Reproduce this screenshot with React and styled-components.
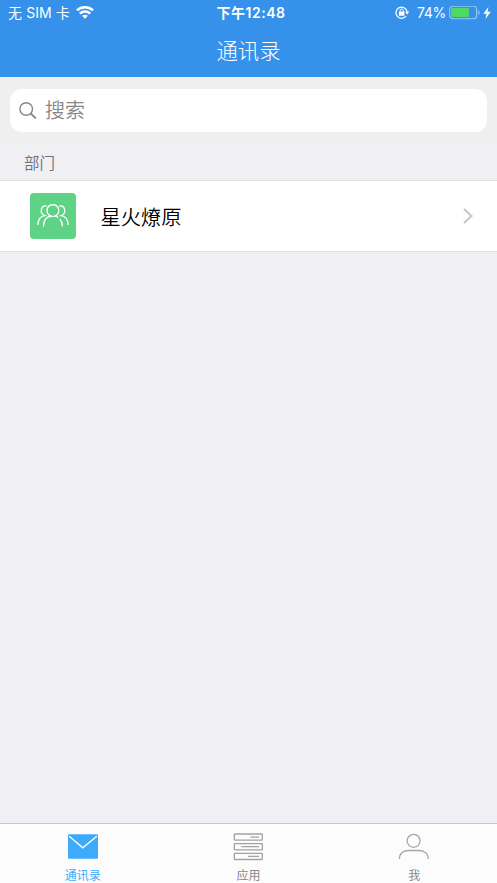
import React from "react";
import styled, { createGlobalStyle } from "styled-components";

const tabs = [
  { label: "通讯录", Icon: MailIcon, active: true },
  { label: "应用", Icon: AppsIcon },
  { label: "我", Icon: MeIcon },
];

const departments = ["星火燎原"];

function WifiIcon() {
  return (
    <svg width="18" height="13" viewBox="0 0 18 13" fill="none" stroke="#fff" strokeWidth="2.5">
      <path d="M1 4.4C5.4.3 12.6.3 17 4.4" />
      <path d="M3.8 7.6C6.8 4.9 11.2 4.9 14.2 7.6" />
      <path d="M9 12.8L6.1 9.8C7.7 8.4 10.3 8.4 11.9 9.8Z" fill="#fff" stroke="none" />
    </svg>
  );
}

function LockIcon() {
  return (
    <svg width="15" height="14" viewBox="0 0 15 14" fill="none" stroke="#fff" strokeWidth="1.3">
      <path d="M11 10.2A5.6 5.6 0 1 1 12.1 5.6" />
      <path d="M10.1 5.6H14.3L12.2 8.5Z" fill="#fff" stroke="none" />
      <rect x="3.9" y="5.6" width="5.6" height="4.2" rx="0.6" fill="#fff" stroke="none" />
      <path d="M5.1 5.9V4.6A1.6 1.6 0 0 1 8.3 4.6V5.9" strokeWidth="1" />
    </svg>
  );
}

function BatteryIcon() {
  return (
    <svg width="32" height="14" viewBox="0 0 32 14">
      <rect x="0.7" y="0.3" width="27" height="12.4" rx="3" fill="none" stroke="#fff" strokeOpacity="0.5" strokeWidth="1.1" />
      <rect x="2.2" y="1.9" width="17.8" height="9.2" rx="0.8" fill="#4cd964" />
      <path d="M29.3 4.2C31.2 5 31.2 8 29.3 8.8Z" fill="#fff" fillOpacity="0.5" />
    </svg>
  );
}

function BoltIcon() {
  return (
    <svg width="8" height="12" viewBox="0 0 8 12">
      <path d="M5.4 0L0.3 6.7H3.5L2.4 12L7.8 4.8H4.5Z" fill="#fff" />
    </svg>
  );
}

function SearchIcon() {
  return (
    <svg width="18" height="18" viewBox="0 0 18 18" fill="none" stroke="#85868a">
      <circle cx="7.2" cy="7" r="6.3" strokeWidth="1.4" />
      <path d="M11.6 11.4L16.8 16.4" strokeWidth="2" />
    </svg>
  );
}

function GroupIcon() {
  return (
    <svg width="32" height="24" viewBox="0 0 32 24" fill="none" stroke="#fff" strokeWidth="1.3">
      <circle cx="15.9" cy="6.5" r="5.9" />
      <path d="M6.4 22.4C6.6 16.2 9.7 12.8 14.3 12.2" />
      <path d="M17.7 12.2Q19.6 12.4 21.2 13.4" />
      <path d="M22.7 15C24.4 16.7 25.4 19.3 25.6 22.4" />
      <path d="M9.8 2.1C3.9 0.9 2 9.2 7.8 11.7C3.6 12.3 1.1 15.7 0.8 20.9" />
      <path d="M22.2 2.1C28.1 0.9 30 9.2 24.2 11.7C28.4 12.3 30.9 15.7 31.2 20.9" />
    </svg>
  );
}

function ChevronIcon() {
  return (
    <svg width="10" height="17" viewBox="0 0 10 17" fill="none" stroke="#c7c7cc" strokeWidth="2.1">
      <path d="M1 1L8.5 8L1 15" />
    </svg>
  );
}

function MailIcon() {
  return (
    <svg width="32" height="28" viewBox="0 0 32 28">
      <rect x="1" y="1.3" width="30" height="24.5" rx="1" fill="#3cabfc" />
      <path d="M2.2 3.2L15.8 14.8L29.8 3.2" fill="none" stroke="#fff" strokeWidth="1.3" />
    </svg>
  );
}

function AppsIcon() {
  return (
    <svg width="32" height="28" viewBox="0 0 32 28" fill="none" stroke="#a2a2a2" strokeWidth="1.3">
      <rect x="2.3" y="1" width="28" height="6.2" rx="0.6" />
      <rect x="2.3" y="10.6" width="28" height="6.2" rx="0.6" />
      <rect x="2.3" y="20.3" width="28" height="6.2" rx="0.6" />
      <path d="M18.4 4.1H27M9.4 13.7H27M16 23.4H27" />
    </svg>
  );
}

function MeIcon() {
  return (
    <svg width="32" height="28" viewBox="0 0 32 28" fill="none" stroke="#a6a6a6" strokeWidth="1.3">
      <circle cx="15.6" cy="7.8" r="6.5" />
      <path d="M1.4 26C1.4 20.3 5.5 17.5 11 17.5H20.4C26.2 17.5 30.3 20.5 30.3 26" />
    </svg>
  );
}

function App() {
  return (
    <Container>
      <GlobalStyle />
      <Header>
        <StatusBar>
          <Carrier>
            无 SIM 卡
            <WifiIcon />
          </Carrier>
          <Clock>下午12:48</Clock>
          <Power>
            <LockIcon />
            <Percent>74%</Percent>
            <BatteryIcon />
            <BoltIcon />
          </Power>
        </StatusBar>
        <Title>通讯录</Title>
      </Header>
      <SearchBar>
        <SearchBox>
          <SearchIcon />
          <SearchHint>搜索</SearchHint>
        </SearchBox>
      </SearchBar>
      <SectionTitle>部门</SectionTitle>
      {departments.map((name) => (
        <Row key={name}>
          <GroupAvatar>
            <GroupIcon />
          </GroupAvatar>
          <RowName>{name}</RowName>
          <ChevronIcon />
        </Row>
      ))}
      <TabBar>
        {tabs.map(({ label, Icon, active }) => (
          <Tab key={label} $active={active}>
            <Icon />
            <TabLabel>{label}</TabLabel>
          </Tab>
        ))}
      </TabBar>
    </Container>
  );
}

export default App;

const GlobalStyle = createGlobalStyle`
  * {
    box-sizing: border-box;
  }
  body {
    margin: 0;
    font-family: Inter, "Noto Sans CJK SC", sans-serif;
  }
  svg {
    display: block;
    flex-shrink: 0;
  }
`;
const Container = styled.div`
  display: flex;
  flex-direction: column;
  height: 100vh;
  min-height: 883px;
  background-color: #efeff4;
`;
const Header = styled.header`
  height: 77px;
  color: white;
  background-color: #3591e9;
`;
const StatusBar = styled.div`
  display: grid;
  grid-template-columns: 1fr auto 1fr;
  align-items: center;
  height: 25px;
  padding: 0 6px 0 8px;
  font-size: 14px;
  line-height: 25px;
  white-space: nowrap;
`;
const Carrier = styled.div`
  display: flex;
  align-items: center;
  gap: 6px;
  letter-spacing: 0.1px;
`;
const Clock = styled.div`
  padding-left: 3px;
  font-weight: 600;
  letter-spacing: 0.55px;
`;
const Power = styled.div`
  display: flex;
  align-items: center;
  justify-content: flex-end;

  > svg:last-child {
    margin-left: 2px;
  }
`;
const Percent = styled.span`
  margin: 0 3px 0 7px;
  letter-spacing: -0.3px;
`;
const Title = styled.h1`
  margin: 0;
  font-size: 21.3px;
  font-weight: 300;
  line-height: 52px;
  text-align: center;
`;
const SearchBar = styled.div`
  height: 68px;
  padding: 12px 10px;
  background-color: #efefef;
`;
const SearchBox = styled.div`
  display: flex;
  align-items: center;
  gap: 8px;
  height: 43px;
  padding: 0 9px;
  border-radius: 12px;
  color: #85868a;
  background-color: white;
`;
const SearchHint = styled.span`
  padding-top: 2px;
  font-size: 20px;
  font-weight: 350;
  line-height: 43px;
`;
const SectionTitle = styled.h2`
  height: 35px;
  margin: 0;
  padding: 1px 0 0 24px;
  color: #6d6d72;
  font-size: 15.5px;
  font-weight: 350;
  line-height: 35px;
`;
const Row = styled.div`
  display: flex;
  align-items: center;
  height: 72px;
  padding: 0 24px 0 30px;
  border-top: 1px solid #e0e0e5;
  border-bottom: 1px solid #e0e0e5;
  background-color: white;
`;
const GroupAvatar = styled.div`
  display: flex;
  align-items: center;
  justify-content: center;
  width: 46px;
  height: 46px;
  border-radius: 4px;
  background-color: #5fd385;
`;
const RowName = styled.span`
  flex: 1;
  margin-left: 24.5px;
  padding-bottom: 1px;
  color: black;
  font-size: 20.3px;
  font-weight: 350;
`;
const TabBar = styled.nav`
  display: grid;
  grid-template-columns: repeat(3, 1fr);
  height: 60px;
  margin-top: auto;
  border-top: 1px solid #c8c8cc;
  background-color: #fcfcfc;
`;
const Tab = styled.div`
  display: flex;
  flex-direction: column;
  align-items: center;
  padding-top: 9px;
  color: ${(props) => (props.$active ? "#3cabfc" : "#888")};
`;
const TabLabel = styled.span`
  margin-top: 6px;
  font-size: 12px;
  font-weight: 400;
  line-height: 18px;
`;
